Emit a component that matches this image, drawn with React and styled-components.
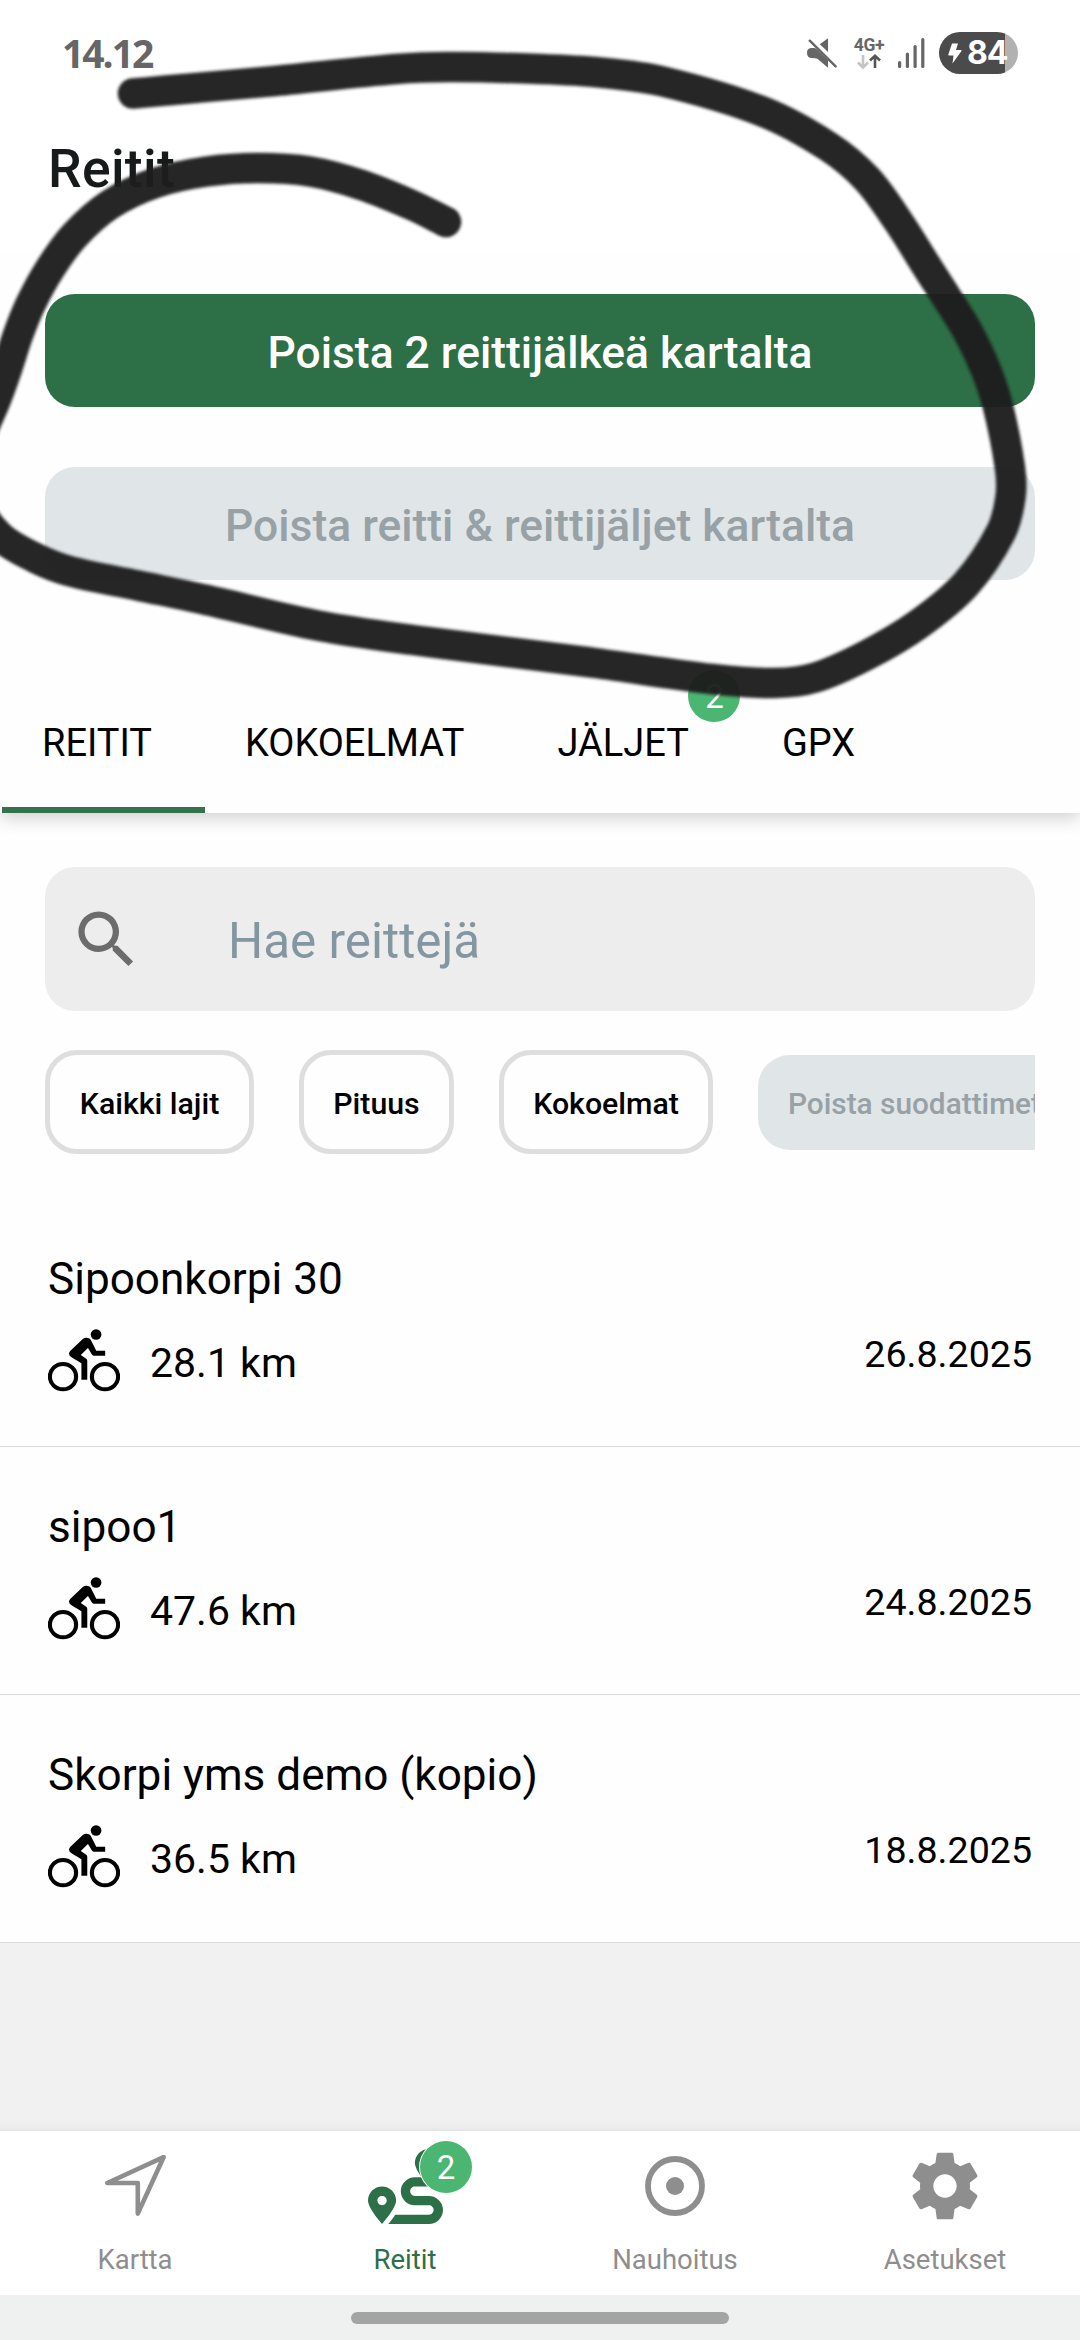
import React from "react";
import styled, { createGlobalStyle } from "styled-components";
import { MdSearch } from "react-icons/md";
import { FaRoute } from "react-icons/fa";

const GlobalStyle = createGlobalStyle`
  * { box-sizing: border-box; }
  body { margin: 0; background: #fefefe; font-family: Roboto, sans-serif; color: #000; }
  button { font-family: inherit; margin: 0; }
`;

const Screen = styled.div`
  position: relative;
  width: 1080px;
  height: 2340px;
  display: flex;
  flex-direction: column;
  overflow: hidden;
  background: #fefefe;
`;

const StatusBar = styled.div`
  flex: none;
  height: 106px;
  padding: 0 62px 0 62px;
  display: flex;
  justify-content: space-between;
  align-items: center;
  background: #fff;
`;
const Clock = styled.span`
  font: 700 39px/42px "Open Sans", sans-serif;
  letter-spacing: -2px;
  color: #666;
`;
const StatusIcons = styled.div`
  display: flex;
  align-items: center;
  height: 42px;
`;
const Network = styled.div`
  width: 34px;
  height: 34px;
  margin-left: 15px;
  padding-top: 2px;
  display: flex;
  flex-direction: column;
  align-items: center;
  font: 700 17.5px/14px Roboto, sans-serif;
  letter-spacing: -0.3px;
  color: #666;
  gap: 2px;
`;
const Signal = styled.svg`
  margin-left: 12px;
`;
const Battery = styled.div`
  margin-left: 14px;
  width: 79px;
  height: 42px;
  border-radius: 21px;
  display: flex;
  align-items: center;
  padding-left: 9px;
  gap: 5px;
  background: linear-gradient(to right, #4b4b4b 66px, #b1b1b1 66px);
  color: #fff;
  font: 700 32px/42px Inter, sans-serif;
  letter-spacing: -1px;
`;

const Header = styled.header`
  flex: none;
  height: 144px;
  padding: 28px 48px 0;
  background: #fff;
`;
const Title = styled.h1`
  margin: 0;
  font-weight: 500;
  font-size: 53.5px;
  line-height: 70px;
  letter-spacing: 0.3px;
  color: #171a1a;
`;

const Actions = styled.section`
  flex: none;
  display: flex;
  flex-direction: column;
  gap: 60px;
  padding: 44px 45px 0;
  height: 410px;
`;
const ActionButton = styled.button`
  height: 113px;
  border: 0;
  border-radius: 30px;
  padding: 4px 0 0;
  font-size: 44.4px;
  font-weight: 500;
  background: ${(p) => (p.$muted ? "#e0e5e8" : "#2d6f46")};
  color: ${(p) => (p.$muted ? "#97a1a6" : "#fff")};
`;

const Tabs = styled.nav`
  flex: none;
  height: 153px;
  padding-left: 2px;
  display: flex;
  background: #fefefe;
  box-shadow: 0 4px 18px rgba(0, 0, 0, 0.2);
  clip-path: inset(0 0 -40px 0);
`;
const Tab = styled.div`
  position: relative;
  height: 153px;
  padding: 60px 53px 0 40px;
  font-size: 38px;
  line-height: 46px;
  border-bottom: 6px solid ${(p) => (p.$active ? "#33724a" : "transparent")};
`;
const Badge = styled.span`
  position: absolute;
  width: 52px;
  height: 52px;
  border-radius: 50%;
  background: #4bb672;
  color: #fff;
  text-align: center;
  font-size: 33px;
  line-height: 54px;
`;
const TabBadge = styled(Badge)`
  left: 171px;
  top: 10px;
`;

const Filters = styled.section`
  flex: none;
  padding: 54px 45px 0;
  height: 386px;
`;
const SearchBox = styled.div`
  height: 144px;
  border-radius: 30px;
  background: #ededed;
  display: flex;
  align-items: center;
  padding-left: 24px;
  font-size: 49.4px;
  color: #84969f;
  svg { color: #6c6c6c; margin: 0 84px 0 0; }
  span { padding-top: 4px; }
`;
const ChipRow = styled.div`
  margin-top: 39px;
  display: flex;
  align-items: center;
  gap: 45px;
  overflow: hidden;
`;
const Chip = styled.button`
  flex: none;
  width: ${(p) => p.$width}px;
  height: ${(p) => (p.$muted ? 95 : 104)}px;
  padding: ${(p) => (p.$muted ? "2px 0 0 30px" : "2px 0 0")};
  text-align: ${(p) => (p.$muted ? "left" : "center")};
  border: ${(p) => (p.$muted ? "0" : "5px solid #dedede")};
  border-radius: 32px;
  background: ${(p) => (p.$muted ? "#e0e5e8" : "#fefefe")};
  color: ${(p) => (p.$muted ? "#97a1a6" : "#000")};
  font-size: ${(p) => (p.$muted ? 29.8 : 30.3)}px;
  font-weight: 500;
  white-space: nowrap;
`;

const RouteRow = styled.article`
  flex: none;
  height: 248px;
  padding: 48px 48px 0;
  border-bottom: 1px solid #d9d9d9;
`;
const RouteName = styled.div`
  font-size: 44.1px;
  line-height: 65px;
`;
const RouteMeta = styled.div`
  display: flex;
  align-items: flex-start;
  height: 80px;
`;
const Distance = styled.span`
  margin: 28px 0 0 30px;
  font-size: 41px;
  line-height: 46px;
`;
const DateText = styled.time`
  margin: 19px 0 0 auto;
  font-size: 37.6px;
  line-height: 46px;
`;
const BikeSvg = styled.svg`
  margin-top: 17px;
`;
const Filler = styled.div`
  flex: 1;
  background: linear-gradient(to bottom, #f1f1f1 calc(100% - 12px), #ebebeb calc(100% - 2px), #e0e0e0);
`;

const BottomNav = styled.nav`
  flex: none;
  height: 164px;
  display: grid;
  grid-template-columns: repeat(4, 1fr);
  background: #fff;
`;
const NavItem = styled.div`
  position: relative;
  display: flex;
  flex-direction: column;
  align-items: center;
  color: ${(p) => (p.$active ? "#2d6f46" : "#8e8e8e")};
  font-size: 27.5px;
  line-height: 34px;
`;
const NavIcon = styled.div`
  height: 112px;
  padding-bottom: 2px;
  display: flex;
  align-items: center;
`;
const NavBadge = styled(Badge)`
  left: 150px;
  top: 10px;
  box-shadow: 0 0 0 1px #fff;
`;
const GestureArea = styled.div`
  flex: none;
  height: 45px;
  padding-top: 17px;
  display: flex;
  justify-content: center;
  background: #eff1f0;
`;
const GestureBar = styled.div`
  width: 378px;
  height: 12px;
  border-radius: 6px;
  background: #a3a5a4;
`;
const Ink = styled.svg`
  position: absolute;
  left: 0;
  top: 0;
  pointer-events: none;
`;

const inkPoints = [
  [133, 93.5], [172, 90], [275, 81], [396, 69], [450, 67], [540, 69], [600, 72.5], [663, 81.5],
  [763.8, 112], [829, 147], [867, 179], [898, 221], [929, 270], [947, 298], [968, 332], [986, 370],
  [998, 406.7], [1010, 468], [1010.5, 497], [1001, 532], [966, 584],
  [918.8, 624], [867, 655], [815.5, 677.5], [774, 683], [712, 679], [595, 663], [413, 640],
  [320, 626], [206.6, 600], [137.7, 585.5], [69, 571], [34.4, 557.5], [0, 536.7], [-22, 505],
  [-26, 465], [-17, 430], [-5, 402], [7, 369], [18, 335], [30.6, 304], [50.5, 268], [75, 235], [110, 204.5],
  [155, 183], [206.6, 171.5], [258, 168], [310, 171.5], [361.6, 185], [413, 205.6], [446, 222],
];

// Catmull-Rom spline through the points, written as cubic curves.
const smoothPath = (pts) =>
  pts.slice(0, -1).reduce((d, p1, i) => {
    const p0 = pts[i - 1] || p1;
    const p2 = pts[i + 1];
    const p3 = pts[i + 2] || p2;
    const span = Math.hypot(p2[0] - p1[0], p2[1] - p1[1]);
    const t1 = [p2[0] - p0[0], p2[1] - p0[1]];
    const t2 = [p3[0] - p1[0], p3[1] - p1[1]];
    const k1 = span / 3 / Math.hypot(t1[0], t1[1]);
    const k2 = span / 3 / Math.hypot(t2[0], t2[1]);
    const a = [p1[0] + t1[0] * k1, p1[1] + t1[1] * k1];
    const b = [p2[0] - t2[0] * k2, p2[1] - t2[1] * k2];
    return `${d} C${a.join(" ")} ${b.join(" ")} ${p2.join(" ")}`;
  }, `M${pts[0].join(" ")}`);

const MuteIcon = () => (
  <svg width="30" height="30" viewBox="772 114 87 90" preserveAspectRatio="none" fill="#666">
    <path d="M833 115 L809 133 L833 156Z M772 158 Q772 144 786 144 L791 144 Q797 143 802 149 L833 181 V203 L802 176 Q797 174 786 174 Q772 174 772 158Z" />
    <path d="M780 122 L855 199" stroke="#666" strokeWidth="7" strokeLinecap="round" />
  </svg>
);

const DataArrows = () => (
  <svg width="24" height="15" viewBox="0 0 24 15" fill="none" strokeWidth="2.6">
    <path d="M6 1 V13 M1 8.5 L6 13.5 L11 8.5" stroke="#c4c4c4" />
    <path d="M18 14 V2 M13 6.5 L18 1.8 L23 6.5" stroke="#555" />
  </svg>
);

const BikeIcon = () => (
  <BikeSvg width="72" height="63" viewBox="139 295 209 189" preserveAspectRatio="none">
    <g fill="none" stroke="#000" strokeWidth="12">
      <circle cx="182.5" cy="438" r="38" />
      <circle cx="304.5" cy="438" r="38" />
    </g>
    <circle cx="278.5" cy="311.5" r="15.5" />
    <path d="M240 325 Q248 319 258 323 Q262 325 265 331 L279 360 H305 V375 H272 Q268 375 266 371 L255 352 L234 373 L250 384 Q253 386 253 391 V447 H236 V398 L206 379 Q200 375 200 369 Q200 364 204 360Z" />
  </BikeSvg>
);

const ArrowIcon = () => (
  <svg width="62" height="64" viewBox="104 2154 62 64" fill="none" stroke="#8e8e8e" strokeWidth="4.6" strokeLinejoin="round">
    <path d="M163.6 2157.2 L107.3 2183 H137.8 V2213.6Z" />
  </svg>
);

const RecordIcon = () => (
  <svg width="60" height="60" viewBox="0 0 60 60">
    <circle cx="30" cy="30" r="27" fill="none" stroke="#8e8e8e" strokeWidth="5.8" />
    <circle cx="30" cy="30" r="9" fill="#8e8e8e" />
  </svg>
);

const GearIcon = () => (
  <svg width="80" height="80" viewBox="0 0 24 24" fill="currentColor">
    <path d="M19.43 12.98c.04-.32.07-.64.07-.98s-.03-.66-.07-.98l2.11-1.65c.19-.15.24-.42.12-.64l-2-3.46c-.12-.22-.39-.3-.61-.22l-2.49 1c-.52-.4-1.08-.73-1.69-.98l-.38-2.65C14.46 2.18 14.25 2 14 2h-4c-.25 0-.46.18-.49.42l-.38 2.65c-.61.25-1.17.59-1.69.98l-2.49-1c-.23-.09-.49 0-.61.22l-2 3.46c-.13.22-.07.49.12.64l2.11 1.65c-.04.32-.07.65-.07.98s.03.66.07.98l-2.11 1.65c-.19.15-.24.42-.12.64l2 3.46c.12.22.39.3.61.22l2.49-1c.52.4 1.08.73 1.69.98l.38 2.65c.03.24.24.42.49.42h4c.25 0 .46-.18.49-.42l.38-2.65c.61-.25 1.17-.59 1.69-.98l2.49 1c.23.09.49 0 .61-.22l2-3.46c.12-.22.07-.49-.12-.64l-2.11-1.65zM12 15.5c-1.93 0-3.5-1.57-3.5-3.5s1.57-3.5 3.5-3.5 3.5 1.57 3.5 3.5-1.57 3.5-3.5 3.5z" />
  </svg>
);

const routes = [
  { name: "Sipoonkorpi 30", distance: "28.1 km", date: "26.8.2025" },
  { name: "sipoo1", distance: "47.6 km", date: "24.8.2025" },
  { name: "Skorpi yms demo (kopio)", distance: "36.5 km", date: "18.8.2025" },
];

export default function App() {
  return (
    <>
      <GlobalStyle />
      <Screen>
        <StatusBar>
          <Clock>14.12</Clock>
          <StatusIcons>
            <MuteIcon />
            <Network>
              <span>4G+</span>
              <DataArrows />
            </Network>
            <Signal width="27" height="30" viewBox="0 0 27 30" fill="#666">
              <rect x="0" y="23" width="3.2" height="7" rx="1.5" />
              <rect x="7.8" y="14.5" width="3.2" height="15.5" rx="1.5" />
              <rect x="15.5" y="7" width="3.2" height="23" rx="1.5" />
              <rect x="23.2" y="0" width="3.2" height="30" rx="1.5" />
            </Signal>
            <Battery>
              <svg width="14" height="21" viewBox="0 0 14 21" fill="#fff">
                <path d="M4 0.5 H10 L8 7 H13 Q14 7 13.3 8.2 L4.5 20.5 L5.5 12.5 H1 Q0 12.5 0.4 11.3Z" />
              </svg>
              84
            </Battery>
          </StatusIcons>
        </StatusBar>
        <Header>
          <Title>Reitit</Title>
        </Header>
        <Actions>
          <ActionButton>Poista 2 reittijälkeä kartalta</ActionButton>
          <ActionButton $muted>Poista reitti &amp; reittijäljet kartalta</ActionButton>
        </Actions>
        <Tabs>
          <Tab $active>REITIT</Tab>
          <Tab>KOKOELMAT</Tab>
          <Tab>
            JÄLJET
            <TabBadge>2</TabBadge>
          </Tab>
          <Tab>GPX</Tab>
        </Tabs>
        <Filters>
          <SearchBox>
            <MdSearch size={75} />
            <span>Hae reittejä</span>
          </SearchBox>
          <ChipRow>
            <Chip $width={209}>Kaikki lajit</Chip>
            <Chip $width={155}>Pituus</Chip>
            <Chip $width={214}>Kokoelmat</Chip>
            <Chip $width={320} $muted>Poista suodattimet</Chip>
          </ChipRow>
        </Filters>
        {routes.map((r) => (
          <RouteRow key={r.name}>
            <RouteName>{r.name}</RouteName>
            <RouteMeta>
              <BikeIcon />
              <Distance>{r.distance}</Distance>
              <DateText>{r.date}</DateText>
            </RouteMeta>
          </RouteRow>
        ))}
        <Filler />
        <BottomNav>
          <NavItem>
            <NavIcon><ArrowIcon /></NavIcon>
            Kartta
          </NavItem>
          <NavItem $active>
            <NavIcon><FaRoute size={75} /></NavIcon>
            Reitit
            <NavBadge>2</NavBadge>
          </NavItem>
          <NavItem>
            <NavIcon><RecordIcon /></NavIcon>
            Nauhoitus
          </NavItem>
          <NavItem>
            <NavIcon><GearIcon /></NavIcon>
            Asetukset
          </NavItem>
        </BottomNav>
        <GestureArea>
          <GestureBar />
        </GestureArea>
        <Ink width="1080" height="720" viewBox="0 0 1080 720">
          <defs>
            <filter id="soft" x="-5%" y="-5%" width="110%" height="110%">
              <feGaussianBlur stdDeviation="1.8" />
            </filter>
          </defs>
          <path
            d={smoothPath(inkPoints)}
            fill="none"
            stroke="#1e1e1e"
            strokeOpacity="0.96"
            strokeWidth="30.5"
            strokeLinecap="round"
            strokeLinejoin="round"
            filter="url(#soft)"
          />
        </Ink>
      </Screen>
    </>
  );
}
